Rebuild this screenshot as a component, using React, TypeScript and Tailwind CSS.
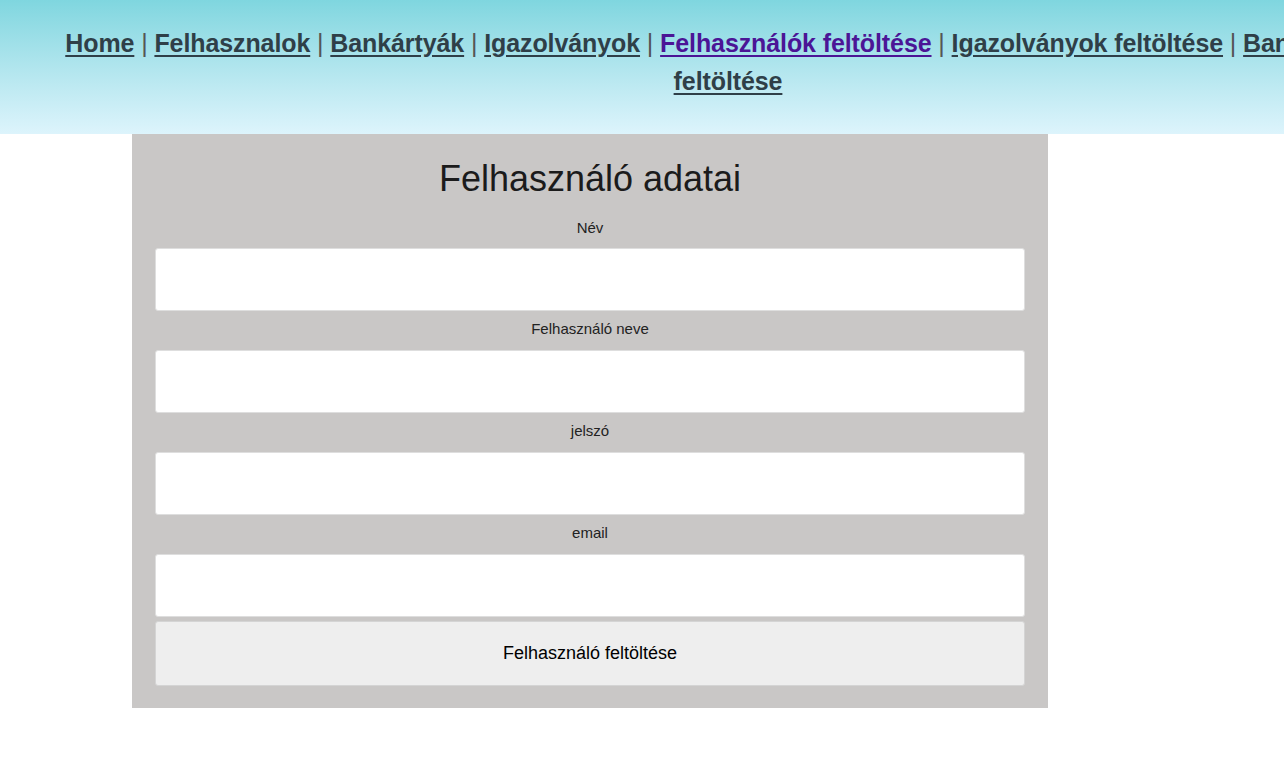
import React from "react";

const links = [
  { label: "Home", active: false },
  { label: "Felhasznalok", active: false },
  { label: "Bankártyák", active: false },
  { label: "Igazolványok", active: false },
  { label: "Felhasználók feltöltése", active: true },
  { label: "Igazolványok feltöltése", active: false },
  { label: "Bankkártyák feltöltése", active: false },
];

const fields = ["Név", "Felhasználó neve", "jelszó", "email"];

export default function App() {
  return (
    <div className="min-h-[769px] w-full overflow-hidden bg-white font-['Liberation_Sans',Arial,sans-serif]">
      {/* Header nav */}
      <header className="h-[134px] w-full bg-gradient-to-b from-[#7fd6df] to-[#ddf4fc] pt-[24px]">
        <nav className="ml-[28px] w-[1400px] text-center text-[25px] leading-[38px] tracking-[-0.1px] text-[#555]">
          {links.map((l, i) => (
            <React.Fragment key={l.label}>
              {i > 0 && <span> | </span>}
              <a
                href="#"
                className={
                  "font-bold underline underline-offset-[3px] " +
                  (l.active ? "text-[#4b1596]" : "text-[#2f3f48]")
                }
              >
                {l.label}
              </a>
            </React.Fragment>
          ))}
        </nav>
      </header>

      {/* Form panel */}
      <main className="ml-[132px] w-[916px] bg-[#c9c7c6] px-[23px] pb-[22px] pt-[24px]">
        <h1 className="text-center text-[36px] font-normal leading-[42px] text-[#1b1b1b]">
          Felhasználó adatai
        </h1>
        <form className="flex flex-col" onSubmit={(e) => e.preventDefault()}>
          {fields.map((f, i) => (
            <div key={f} className="flex flex-col">
              <label
                className={
                  "text-center text-[15px] leading-[20px] text-[#222] " +
                  (i === 0 ? "pb-[10px] pt-[18px]" : "pb-[11px] pt-[8px]")
                }
              >
                {f}
              </label>
              <input
                type={f === "jelszó" ? "password" : "text"}
                className="h-[63px] w-full rounded-[3px] border border-[#dedede] bg-white px-3 outline-none"
              />
            </div>
          ))}
          <button
            type="submit"
            className="mt-[4px] h-[65px] w-full rounded-[3px] border border-[#d4d4d4] bg-[#eeeeee] text-[18px] text-black"
          >
            Felhasználó feltöltése
          </button>
        </form>
      </main>
    </div>
  );
}
